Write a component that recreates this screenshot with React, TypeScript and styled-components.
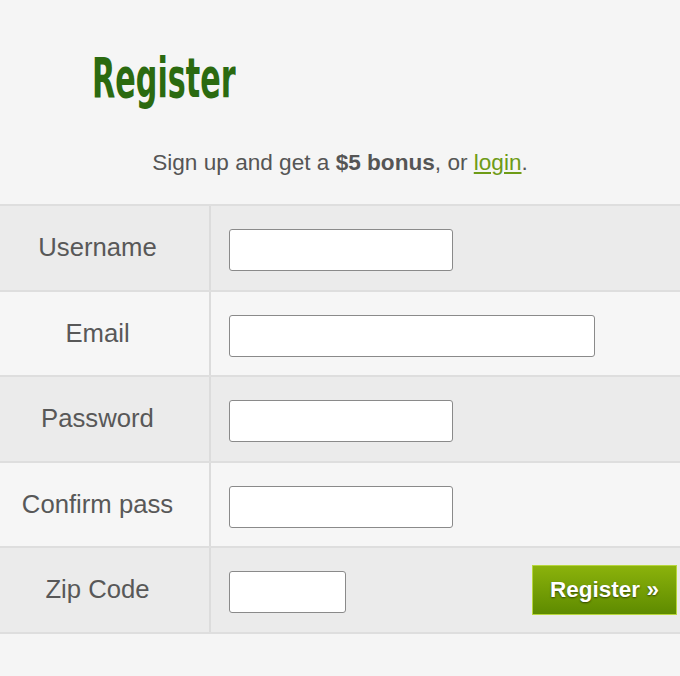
import styled, { createGlobalStyle } from "styled-components";

const GlobalStyle = createGlobalStyle`
  html, body {
    margin: 0;
    padding: 0;
    background: #f5f5f5;
    font-family: "Liberation Sans", Arial, sans-serif;
  }
`;

const Page = styled.div`
  width: 680px;
  height: 676px;
  overflow: hidden;
  background: #f5f5f5;
`;

const Header = styled.div`
  height: 204px;
  display: flex;
  flex-direction: column;
`;

const TitleWrap = styled.h1`
  margin: 0;
  padding: 37px 0 0 92px;
  height: 82px;
  line-height: 82px;
`;

const Title = styled.span`
  display: inline-block;
  font-family: "Liberation Sans Narrow", "DejaVu Sans Condensed", sans-serif;
  font-weight: 700;
  font-size: 56px;
  color: #2b6a10;
  transform: scaleX(0.6);
  transform-origin: left center;
`;

const Intro = styled.p`
  margin: 31px 0 0;
  text-align: center;
  font-size: 22.6px;
  color: #555;

  strong {
    font-weight: 700;
  }

  a {
    color: #6e9b16;
    text-decoration: underline;
  }
`;

const Form = styled.form`
  border-top: 2px solid #dedede;
`;

const Row = styled.div<{ $alt?: boolean }>`
  display: grid;
  grid-template-columns: 211px 1fr;
  height: 83.5px;
  border-bottom: 2px solid #dedede;
  background: ${(p) => (p.$alt ? "#f6f6f6" : "#ebebeb")};
`;

const Label = styled.label`
  display: flex;
  align-items: center;
  justify-content: center;
  padding-right: 14px;
  font-size: 25.7px;
  color: #585858;
  border-right: 2px solid #dcdcdc;
`;

const Field = styled.div`
  display: flex;
  align-items: center;
  justify-content: space-between;
  padding: 0 3px 0 18px;
`;

const Input = styled.input<{ $w: number }>`
  box-sizing: border-box;
  width: ${(p) => p.$w}px;
  height: 42px;
  margin-top: 5px;
  border: 1.5px solid #8a8a8a;
  border-radius: 3px;
  background: #fff;
  font-size: 18px;
  padding: 0 8px;
  outline: none;
`;

const Button = styled.button`
  box-sizing: border-box;
  width: 145px;
  height: 50px;
  border: 1px solid #b7d63c;
  background: linear-gradient(#8bb20b, #5e8b00);
  color: #fff;
  font-family: "Liberation Sans", Arial, sans-serif;
  font-weight: 700;
  font-size: 22.5px;
  text-shadow: 0 1px 2px rgba(0, 0, 0, 0.55);
  cursor: pointer;
`;

const Spacer = styled.span``;

const fields = [
  { label: "Username", width: 224 },
  { label: "Email", width: 366 },
  { label: "Password", width: 224 },
  { label: "Confirm pass", width: 224 },
];

export default function App() {
  return (
    <Page>
      <GlobalStyle />
      <Header>
        <TitleWrap>
          <Title>Register</Title>
        </TitleWrap>
        <Intro>
          Sign up and get a <strong>$5 bonus</strong>, or <a href="#">login</a>.
        </Intro>
      </Header>
      <Form onSubmit={(e) => e.preventDefault()}>
        {fields.map((f, i) => (
          <Row key={f.label} $alt={i % 2 === 1}>
            <Label>{f.label}</Label>
            <Field>
              <Input $w={f.width} type={f.label.includes("ass") ? "password" : "text"} />
              <Spacer />
            </Field>
          </Row>
        ))}
        <Row>
          <Label>Zip Code</Label>
          <Field>
            <Input $w={117} type="text" />
            <Button type="submit">Register »</Button>
          </Field>
        </Row>
      </Form>
    </Page>
  );
}
